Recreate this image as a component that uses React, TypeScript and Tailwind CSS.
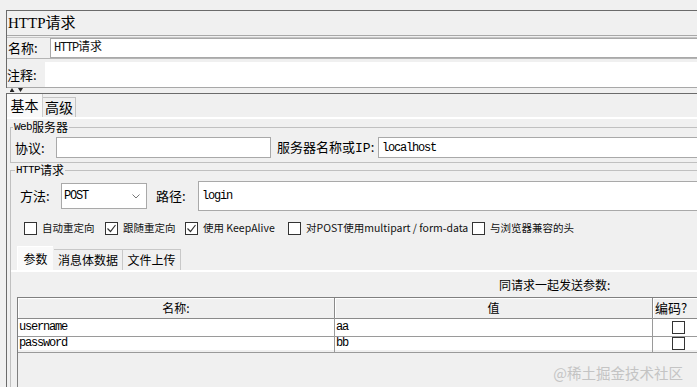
import React from "react"

const mono = "font-['Liberation_Mono','Noto_Sans_CJK_SC',monospace] text-[12px] tracking-[-1.2px]"

const Check = ({ checked }: { checked?: boolean }) => (
  <span className="flex h-[13px] w-[13px] shrink-0 items-center justify-center border border-[#333] bg-white">
    {checked && (
      <svg width="11" height="11" viewBox="0 0 11 11">
        <path d="M1.5 5.5 L4.5 8.5 L9.5 2" fill="none" stroke="#333" strokeWidth="1.2" />
      </svg>
    )}
  </span>
)

const options = [
  { label: "自动重定向", checked: false, w: "w-[81px]" },
  { label: "跟随重定向", checked: true, w: "w-[80px]" },
  { label: "使用 KeepAlive", checked: true, w: "w-[103px]" },
  { label: "对POST使用multipart / form-data", checked: false, w: "w-[184px]" },
  { label: "与浏览器兼容的头", checked: false, w: "w-[120px]" }
]

const params = [
  { name: "username", value: "aa" },
  { name: "password", value: "bb" }
]

const App = () => {
  return (
    <div className="relative h-[387px] w-[697px] overflow-hidden bg-[#f0f0f0] pt-[10px] text-black font-['Noto_Sans_CJK_SC',sans-serif]">
      {/* header panel */}
      <div className="ml-[6px] border-l border-t border-[#6b6b6b]">
        <div className="h-[24px] pl-[1px] text-[15px] leading-[24px] font-['Liberation_Serif','Noto_Sans_CJK_SC',serif]">
          HTTP请求
        </div>
        <div className="h-[3px] border-y border-t-[#a8a8a8] border-b-[#c4c4c4]" />
        <div className="flex h-[20px] items-center">
          <span className="w-[43px] pl-[1px] text-[13px]">名称:</span>
          <div className={`flex h-[20px] flex-1 items-center border border-r-0 border-[#a9a9a9] bg-white pl-[3px] ${mono} text-[#111]`}>
            HTTP<span className="tracking-normal">请求</span>
          </div>
        </div>
        <div className="h-[4px] border-t border-[#b4b4b4]" />
        <div className="flex h-[25px] items-center">
          <span className="w-[38px] text-[13px]">注释:</span>
          <div className="h-[25px] flex-1 bg-white" />
        </div>
        <div className="border-b border-[#a8a8a8]" />
      </div>

      {/* splitter arrows */}
      <div className="flex h-[5px] items-start pl-[10px]">
        <svg width="14" height="5" viewBox="0 0 14 5">
          <path d="M2 0 L4.5 4 L-0.5 4 Z" fill="#222" />
          <path d="M8 0 L13 0 L10.5 4 Z" fill="#222" />
        </svg>
      </div>

      {/* tabbed pane */}
      <div className="ml-[6px] border-l border-t border-[#6b6b6b]">
        <div className="flex h-[23px] items-end text-[14px]">
          <div className="flex h-[23px] w-[36px] items-center justify-center border-r border-[#cdcdcd] bg-[#f9f9f9]">基本</div>
          <div className="flex h-[20px] w-[33px] items-center justify-center border-r border-t border-[#c4c4c4]">高级</div>
        </div>
        <div className="border-t-2 border-white pl-[3px] pt-[1px]">
          {/* Web server */}
          <fieldset className="border border-r-0 border-[#c0c0c0] pb-[4px]">
            <legend className="ml-[2px] flex h-[14px] items-center px-[1px] text-[12px] leading-[14px]">
              <span className="font-['Liberation_Mono',monospace] text-[11px] leading-[14px] tracking-[-0.6px]">Web</span>服务器
            </legend>
            <div className="mt-[3px] flex h-[21px] items-center text-[13px]">
              <span className="w-[45px] pl-[4px]">协议:</span>
              <div className="h-[21px] w-[215px] border border-[#a9a9a9] bg-white" />
              <span className="ml-[6px] w-[101px]">
                服务器名称或<span className="font-['Liberation_Mono',monospace]">IP</span>:
              </span>
              <div className={`flex h-[21px] flex-1 items-center border border-r-0 border-[#a9a9a9] bg-white pl-[3px] ${mono}`}>
                localhost
              </div>
            </div>
          </fieldset>

          {/* HTTP request */}
          <fieldset className="h-[260px] border border-r-0 border-[#c0c0c0]">
            <legend className="ml-[4px] flex h-[14px] items-center px-[1px] text-[12px] leading-[14px]">
              <span className="font-['Liberation_Mono',monospace] text-[11px] leading-[14px] tracking-[-0.6px]">HTTP</span>请求
            </legend>
            <div className="mt-[4px] flex h-[30px] items-center pl-[9px] text-[13px]">
              <span className="w-[41px]">方法:</span>
              <div className={`flex h-[26px] w-[86px] items-center justify-between border border-[#a9a9a9] bg-white pl-[2px] pr-[6px] ${mono}`}>
                POST
                <svg width="8" height="5" viewBox="0 0 8 5">
                  <path d="M0.5 0.5 L4 4 L7.5 0.5" fill="none" stroke="#777" strokeWidth="1" />
                </svg>
              </div>
              <span className="ml-[9px] w-[42px]">路径:</span>
              <div className={`flex h-[30px] flex-1 items-center border border-r-0 border-[#a9a9a9] bg-white pl-[3px] ${mono}`}>
                login
              </div>
            </div>

            <div className="mt-[10px] flex h-[14px] items-center pl-[13px] text-[10.5px] leading-[14px] text-[#111]">
              {options.map((o) => (
                <div key={o.label} className={`flex h-[14px] shrink-0 items-center gap-[5px] ${o.w}`}>
                  <Check checked={o.checked} />
                  <span className="whitespace-nowrap">{o.label}</span>
                </div>
              ))}
            </div>

            {/* inner tabs */}
            <div className="mt-[11px] flex h-[24px] items-end pl-[6px] text-[12px]">
              <div className="flex h-[24px] w-[36px] items-center justify-center border-l border-t border-white bg-[#fafafa]">参数</div>
              <div className="ml-[1px] flex h-[21px] w-[69px] items-center justify-center border-r border-t border-[#c8c8c8]">消息体数据</div>
              <div className="flex h-[21px] w-[58px] items-center justify-center border-r border-t border-[#c8c8c8]">文件上传</div>
            </div>
            <div className="border-t-2 border-white pl-[6px]">
              <div className="h-[25px] pl-[482px] text-[12px] leading-[25px]">同请求一起发送参数:</div>
              <div className="h-[120px] border-l border-t border-[#7f7f7f]">
                <div className="grid h-[20px] grid-cols-[317px_318px_1fr] text-[12px]">
                  <div className="flex items-center justify-center border-b border-r border-[#8a8a8a] shadow-[inset_1px_1px_0_#fff]">名称:</div>
                  <div className="flex items-center justify-center border-b border-r border-[#8a8a8a] shadow-[inset_1px_1px_0_#fff]">值</div>
                  <div className="flex items-center border-b border-[#8a8a8a] pl-[2px] text-[13px] shadow-[inset_1px_1px_0_#fff]">编码?</div>
                </div>
                {params.map((p) => (
                  <div key={p.name} className={`grid h-[16px] grid-cols-[317px_318px_1fr] bg-white ${mono}`}>
                    <div className="flex items-center border-b border-r border-[#9a9a9a] pl-[1px]">{p.name}</div>
                    <div className="flex items-center border-b border-r border-[#9a9a9a] pl-[1px]">{p.value}</div>
                    <div className="flex items-center border-b border-[#9a9a9a] pl-[19px]">
                      <span className="h-[13px] w-[13px] border border-[#333] bg-white" />
                    </div>
                  </div>
                ))}
              </div>
            </div>
          </fieldset>
        </div>
      </div>

      <div className="absolute right-[14px] top-[364px] text-[14.5px] leading-[18px] text-[#c4c4c4]">@稀土掘金技术社区</div>
    </div>
  )
}

export default App
